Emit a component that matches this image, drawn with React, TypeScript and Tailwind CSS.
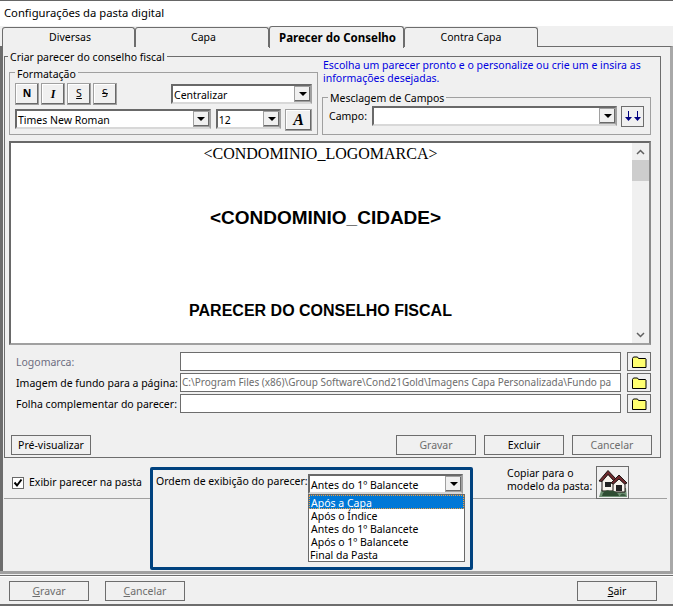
import React from 'react';

const ui = "font-['Noto_Sans',sans-serif] text-[10.5px]";

const Arrow = () => (
  <span className="flex h-full w-[16px] items-center justify-center border-y border-l border-[#a0a0a0] bg-[#f0f0f0] shadow-[inset_-1px_-1px_0_#696969]">
    <span className="border-x-[4px] border-t-[4px] border-x-transparent border-t-black" />
  </span>
);

const Combo: React.FC<{ value: string; className: string }> = ({ value, className }) => (
  <div className={`flex h-[20px] items-center justify-between border-2 border-t-[#696969] border-l-[#696969] border-r-[#a0a0a0] border-b-[#d8d8d8] bg-white pl-[1px] ${className}`}>
    <span className="whitespace-nowrap pt-[3px]">{value}</span>
    <Arrow />
  </div>
);

const Folder = () => (
  <button className="flex h-[19px] w-[24px] items-center justify-center border border-[#6d6d6d]">
    <svg width="15" height="12" viewBox="0 0 15 12">
      <path d="M.5 11.500V2.500L1.500 1H5.500L6.500 2.500H13.500L14 3V11.500Z" fill="#ffff70" stroke="#000" />
    </svg>
  </button>
);

const FmtButton: React.FC<{ children: React.ReactNode; className?: string }> = ({ children, className = '' }) => (
  <button className={`flex h-[22px] items-center justify-center border border-[#a0a0a0] shadow-[inset_-1px_-1px_0_#696969,inset_1px_1px_0_#fff] ${className}`}>
    {children}
  </button>
);

const Btn: React.FC<{ children: React.ReactNode; className: string }> = ({ children, className }) => (
  <button className={`flex h-[20px] items-center justify-center border border-[#6d6d6d] pt-[1px] ${className}`}>{children}</button>
);

const FieldRow: React.FC<{ label: string; labelClass?: string; value?: string }> = ({ label, labelClass = '', value }) => (
  <div className="flex h-[19px] items-center">
    <span className={`w-[170px] whitespace-nowrap pl-[6px] pt-[3px] ${labelClass}`}>{label}</span>
    <div className="h-[19px] w-[441px] overflow-hidden whitespace-nowrap border border-[#6d6d6d] bg-white pl-[1px] text-[10px] leading-[17px] text-[#6d6d6d]">
      {value}
    </div>
    <div className="ml-[6px]">
      <Folder />
    </div>
  </div>
);

const Tab: React.FC<{ label: string; className: string }> = ({ label, className }) => (
  <div className={`mt-[1px] flex h-[20px] items-center justify-center rounded-t-[3px] border-x border-t border-[#6d6d6d] bg-[#f0f0f0] ${className}`}>
    {label}
  </div>
);

const House = () => (
  <svg width="30" height="30" viewBox="0 0 30 30">
    <path d="M1 29L4 20H28L29 29Z" fill="#6d8f72" />
    <path d="M4 23V12L10 6L16 12V23Z" fill="#f7f3ec" stroke="#1d1513" />
    <path d="M1 13L10 2.500L18 11L15.500 12.500L10 6.500L4 13.500Z" fill="#6e2a2e" stroke="#1d1513" />
    <path d="M15 24V15L21 10L27 15V24Z" fill="#f7f3ec" stroke="#1d1513" />
    <path d="M13 15L21 7L29 15L26.500 16L21 11L15.500 16Z" fill="#6e2a2e" stroke="#1d1513" />
    <rect x="7" y="14" width="6" height="5" fill="#222" />
    <rect x="18" y="17" width="6" height="6" fill="#222" />
    <path d="M4 28C5 23 9 21 12 23C15 22 20 24 21 28Z" fill="#2f4d33" />
    <path d="M22 28C23 25 26 25 28 28Z" fill="#3b5a40" />
  </svg>
);

export default function App() {
  return (
    <div className={`relative h-[606px] w-[673px] overflow-hidden bg-[#f0f0f0] text-black ${ui}`}>
      <div className="h-[26px] border-t border-[#666] bg-white pl-[4px] pt-[4px] text-[11.25px] leading-[16px]">
        Configurações da pasta digital
      </div>

      <div className="flex h-[20px] pl-[2px]">
        <Tab label="Diversas" className="w-[133px] pl-[3px]" />
        <Tab label="Capa" className="w-[134px] pl-[3px]" />
        <div className="relative z-10 flex h-[22px] w-[135px] items-center justify-center rounded-t-[3px] border-x border-t border-[#6d6d6d] bg-[#f0f0f0] pl-[2px] text-[11.5px] font-bold">
          Parecer do Conselho
        </div>
        <Tab label="Contra Capa" className="w-[134px]" />
      </div>

      <div className="h-[525px] border-x-[3px] border-t border-[#6d6d6d] border-r-[#a8a8a8] pl-[1px] pr-[6px] pt-[9px]">
        {/* Criar parecer */}
        <div className="relative h-[402px] w-[657px] border border-[#6d6d6d] px-[4px] pt-[17px]">
          <span className="absolute -top-[6px] left-[3px] h-[12px] bg-[#f0f0f0] px-[2px] leading-[13px]">Criar parecer do conselho fiscal</span>

          <div className="flex">
            <div className="relative mt-[-2px] flex h-[63px] w-[309px] flex-col gap-[4px] border border-[#a0a0a0] px-[5px] pt-[10px]">
              <span className="absolute -top-[5px] left-[5px] h-[10px] bg-[#f0f0f0] px-[2px] leading-[13px]">Formatação</span>
              <div className="flex h-[22px]">
                <div className="flex gap-[2px]">
                  <FmtButton className="w-[24px] font-bold">N</FmtButton>
                  <FmtButton className="w-[24px] font-['Liberation_Serif',serif] text-[12px] font-bold italic">I</FmtButton>
                  <FmtButton className="w-[24px] underline">S</FmtButton>
                  <FmtButton className="w-[24px] line-through">S</FmtButton>
                </div>
                <Combo value="Centralizar" className="ml-[54px] mt-[1px] w-[143px]" />
              </div>
              <div className="flex">
                <Combo value="Times New Roman" className="w-[197px]" />
                <Combo value="12" className="ml-[5px] w-[66px]" />
                <FmtButton className="ml-[4px] w-[27px] font-['Liberation_Serif',serif] text-[16px] font-bold italic">A</FmtButton>
              </div>
            </div>

            <div className="ml-[4px] w-[329px]">
              <p className="mt-[-15px] h-[26px] whitespace-nowrap pl-[1px] leading-[13px] text-[#0000e0]">
                Escolha um parecer pronto e o personalize ou crie um e insira as<br />informações desejadas.
              </p>
              <div className="relative mt-[12px] flex h-[38px] items-center border border-[#a0a0a0] pl-[6px]">
                <span className="absolute -top-[6px] left-[5px] h-[11px] bg-[#f0f0f0] px-[2px] leading-[13px]">Mesclagem de Campos</span>
                <span className="w-[43px] pt-[2px]">Campo:</span>
                <Combo value="" className="w-[245px]" />
                <button className="ml-[4px] flex h-[21px] w-[23px] items-center justify-center border border-[#6d6d6d]">
                  <svg width="16" height="13" viewBox="0 0 16 13" fill="#000080">
                    <path d="M3 1H4V7H7L3.500 11L0 7H3ZM12 1H13V7H16L12.500 11L9 7H12Z" />
                  </svg>
                </button>
              </div>
            </div>
          </div>

          {/* editor */}
          <div className="mt-[6px] flex h-[204px] w-[642px] border-2 border-[#696969] border-r-[#8a8a8a] border-b-[#a0a0a0] bg-white">
            <div className="flex-1 pr-[2px] font-['Liberation_Serif',serif] text-[16px] text-black">
              <div className="mt-[2px] h-[20px] text-center leading-[18px]">&lt;CONDOMINIO_LOGOMARCA&gt;</div>
              <div className="mt-[42px] pl-[10px] text-center font-['Liberation_Sans',sans-serif] text-[19px] font-bold leading-[21px]">&lt;CONDOMINIO_CIDADE&gt;</div>
              <div className="mt-[73px] text-center font-['Liberation_Sans',sans-serif] text-[16px] font-bold leading-[19px]">PARECER DO CONSELHO FISCAL</div>
            </div>
            <div className="flex w-[17px] flex-col bg-[#f0f0f0]">
              <div className="flex h-[17px] items-center justify-center">
                <svg width="9" height="6" viewBox="0 0 9 6"><path d="M1 5L4.500 1.500L8 5" fill="none" stroke="#606060" strokeWidth="1.500" /></svg>
              </div>
              <div className="h-[21px] bg-[#cdcdcd]" />
              <div className="flex-1" />
              <div className="flex h-[17px] items-center justify-center">
                <svg width="9" height="6" viewBox="0 0 9 6"><path d="M1 1L4.500 4.500L8 1" fill="none" stroke="#606060" strokeWidth="1.500" /></svg>
              </div>
            </div>
          </div>

          <div className="mt-[7px] flex flex-col gap-[2px] pl-[1px]">
            <FieldRow label="Logomarca:" labelClass="text-[#6d6d80]" />
            <FieldRow label="Imagem de fundo para a página:" value="C:\Program Files (x86)\Group Software\Cond21Gold\Imagens Capa Personalizada\Fundo pa" />
            <FieldRow label="Folha complementar do parecer:" />
          </div>

          <div className="mt-[22px] flex pl-[2px]">
            <Btn className="w-[80px]">Pré-visualizar</Btn>
            <Btn className="ml-[305px] w-[80px] text-[#6d6d6d]">Gravar</Btn>
            <Btn className="ml-[8px] w-[80px]">Excluir</Btn>
            <Btn className="ml-[8px] w-[80px] text-[#6d6d6d]">Cancelar</Btn>
          </div>
        </div>

        {/* exibição */}
        <div className="flex h-[41px] w-[663px] items-start border-b border-[#a0a0a0] pl-[8px]">
          <div className="mt-[17px] flex w-[495px] items-center">
            <span className="flex h-[12px] w-[12px] items-center justify-center border border-[#696969] bg-white">
              <svg width="10" height="10" viewBox="0 0 10 10"><path d="M1.500 4.500L4 7.500L8.500 1.500" fill="none" stroke="#000" strokeWidth="2" /></svg>
            </span>
            <span className="ml-[5px] whitespace-nowrap">Exibir parecer na pasta</span>
          </div>
          <div className="mt-[9px] w-[89px] whitespace-nowrap leading-[13px]">Copiar para o<br />modelo da pasta:</div>
          <button className="mt-[8px] flex h-[33px] w-[33px] items-center justify-center border border-[#6d6d6d]">
            <House />
          </button>
        </div>
      </div>

      {/* destaque e lista aberta */}
      <div className="absolute left-[150px] top-[467px] h-[103px] w-[323px] rounded-[2px] border-[3px] border-[#00427f] bg-[#f0f0f0]">
        <span className="absolute left-[3px] top-[4px] whitespace-nowrap">Ordem de exibição do parecer:</span>
        <Combo value="Antes do 1º Balancete" className="absolute left-[155px] top-[4px] w-[155px]" />
        <div className="absolute left-[155px] top-[24px] h-[68px] w-[157px] border border-[#696969] bg-white">
          <div className="h-[14px] border border-dotted border-[#f0a040] bg-[#0078d7] pl-[1px] leading-[14px] text-white">Após a Capa</div>
          <div className="h-[13px] whitespace-nowrap pl-[2px] leading-[15px]">Após o Índice</div>
          <div className="h-[13px] whitespace-nowrap pl-[2px] leading-[15px]">Antes do 1º Balancete</div>
          <div className="h-[13px] whitespace-nowrap pl-[2px] leading-[15px]">Após o 1º Balancete</div>
          <div className="h-[13px] whitespace-nowrap pl-[1px] leading-[15px]">Final da Pasta</div>
        </div>
      </div>

      <div className="h-[35px] border-t-[3px] border-[#a0a0a0] pt-[1px]">
        <div className="flex h-[29px] items-start border-t border-[#6d6d6d] pl-[9px] pt-[5px] shadow-[inset_0_1px_0_#fff]">
          <Btn className="w-[80px] text-[#6d6d6d]"><span><u>G</u>ravar</span></Btn>
          <Btn className="ml-[16px] w-[80px] text-[#6d6d6d]"><span><u>C</u>ancelar</span></Btn>
          <Btn className="ml-[392px] w-[80px]"><span><u>S</u>air</span></Btn>
        </div>
        <div className="h-[2px] bg-[#6d6d6d]" />
      </div>
    </div>
  );
}
